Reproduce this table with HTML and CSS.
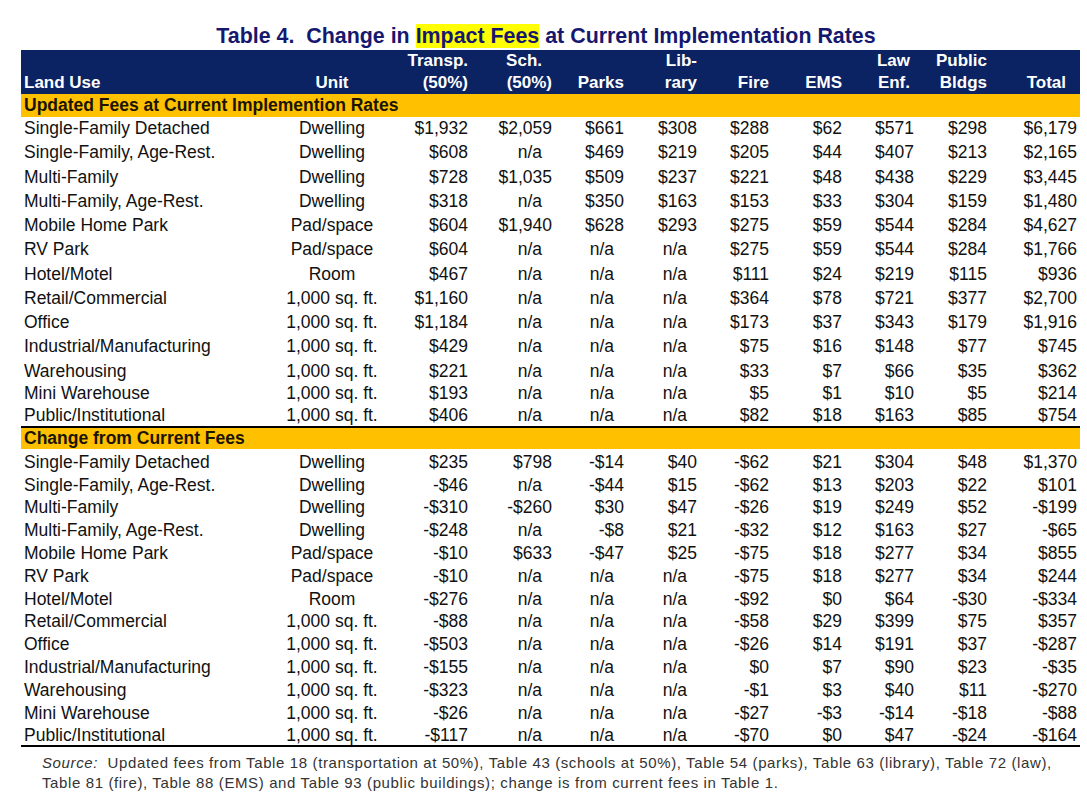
FILE: index.html
```html
<!DOCTYPE html>
<html>
<head>
<meta charset="utf-8">
<link rel="stylesheet" href="styles.css">
</head>
<body>
<div class="page">
  <h1 class="title">Table 4.&nbsp; Change in <span class="hl">Impact Fees</span> at Current Implementation Rates</h1>
  <table class="fees">
    <colgroup>
      <col class="c-land"><col class="c-unit"><col class="c-84"><col class="c-84"><col class="c-72"><col class="c-73"><col class="c-72"><col class="c-73"><col class="c-72"><col class="c-73"><col class="c-total">
    </colgroup>
    <thead>
      <tr>
        <th class="land">Land Use</th>
        <th class="unit">Unit</th>
        <th>Transp.<br>(50%)</th>
        <th><span class="sh10">Sch.</span><br>(50%)</th>
        <th>Parks</th>
        <th>Lib-<br>rary</th>
        <th>Fire</th>
        <th>EMS</th>
        <th class="law">Law<br>Enf.</th>
        <th>Public<br>Bldgs</th>
        <th class="tot">Total</th>
      </tr>
    </thead>
    <tbody class="s1">
      <tr class="sec"><td colspan="11">Updated Fees at Current Implemention Rates</td></tr>
      <tr><td>Single-Family Detached</td><td>Dwelling</td><td>$1,932</td><td>$2,059</td><td>$661</td><td>$308</td><td>$288</td><td>$62</td><td>$571</td><td>$298</td><td>$6,179</td></tr>
      <tr><td>Single-Family, Age-Rest.</td><td>Dwelling</td><td>$608</td><td class="na">n/a</td><td>$469</td><td>$219</td><td>$205</td><td>$44</td><td>$407</td><td>$213</td><td>$2,165</td></tr>
      <tr><td>Multi-Family</td><td>Dwelling</td><td>$728</td><td>$1,035</td><td>$509</td><td>$237</td><td>$221</td><td>$48</td><td>$438</td><td>$229</td><td>$3,445</td></tr>
      <tr><td>Multi-Family, Age-Rest.</td><td>Dwelling</td><td>$318</td><td class="na">n/a</td><td>$350</td><td>$163</td><td>$153</td><td>$33</td><td>$304</td><td>$159</td><td>$1,480</td></tr>
      <tr><td>Mobile Home Park</td><td>Pad/space</td><td>$604</td><td>$1,940</td><td>$628</td><td>$293</td><td>$275</td><td>$59</td><td>$544</td><td>$284</td><td>$4,627</td></tr>
      <tr><td>RV Park</td><td>Pad/space</td><td>$604</td><td class="na">n/a</td><td class="na">n/a</td><td class="na">n/a</td><td>$275</td><td>$59</td><td>$544</td><td>$284</td><td>$1,766</td></tr>
      <tr><td>Hotel/Motel</td><td>Room</td><td>$467</td><td class="na">n/a</td><td class="na">n/a</td><td class="na">n/a</td><td>$111</td><td>$24</td><td>$219</td><td>$115</td><td>$936</td></tr>
      <tr><td>Retail/Commercial</td><td>1,000 sq. ft.</td><td>$1,160</td><td class="na">n/a</td><td class="na">n/a</td><td class="na">n/a</td><td>$364</td><td>$78</td><td>$721</td><td>$377</td><td>$2,700</td></tr>
      <tr><td>Office</td><td>1,000 sq. ft.</td><td>$1,184</td><td class="na">n/a</td><td class="na">n/a</td><td class="na">n/a</td><td>$173</td><td>$37</td><td>$343</td><td>$179</td><td>$1,916</td></tr>
      <tr><td>Industrial/Manufacturing</td><td>1,000 sq. ft.</td><td>$429</td><td class="na">n/a</td><td class="na">n/a</td><td class="na">n/a</td><td>$75</td><td>$16</td><td>$148</td><td>$77</td><td>$745</td></tr>
      <tr class="tight"><td>Warehousing</td><td>1,000 sq. ft.</td><td>$221</td><td class="na">n/a</td><td class="na">n/a</td><td class="na">n/a</td><td>$33</td><td>$7</td><td>$66</td><td>$35</td><td>$362</td></tr>
      <tr class="tight"><td>Mini Warehouse</td><td>1,000 sq. ft.</td><td>$193</td><td class="na">n/a</td><td class="na">n/a</td><td class="na">n/a</td><td>$5</td><td>$1</td><td>$10</td><td>$5</td><td>$214</td></tr>
      <tr class="tight"><td>Public/Institutional</td><td>1,000 sq. ft.</td><td>$406</td><td class="na">n/a</td><td class="na">n/a</td><td class="na">n/a</td><td>$82</td><td>$18</td><td>$163</td><td>$85</td><td>$754</td></tr>
    </tbody>
    <tbody class="s2">
      <tr class="sec"><td colspan="11">Change from Current Fees</td></tr>
      <tr><td>Single-Family Detached</td><td>Dwelling</td><td>$235</td><td>$798</td><td>-$14</td><td>$40</td><td>-$62</td><td>$21</td><td>$304</td><td>$48</td><td>$1,370</td></tr>
      <tr><td>Single-Family, Age-Rest.</td><td>Dwelling</td><td>-$46</td><td class="na">n/a</td><td>-$44</td><td>$15</td><td>-$62</td><td>$13</td><td>$203</td><td>$22</td><td>$101</td></tr>
      <tr><td>Multi-Family</td><td>Dwelling</td><td>-$310</td><td>-$260</td><td>$30</td><td>$47</td><td>-$26</td><td>$19</td><td>$249</td><td>$52</td><td>-$199</td></tr>
      <tr><td>Multi-Family, Age-Rest.</td><td>Dwelling</td><td>-$248</td><td class="na">n/a</td><td>-$8</td><td>$21</td><td>-$32</td><td>$12</td><td>$163</td><td>$27</td><td>-$65</td></tr>
      <tr><td>Mobile Home Park</td><td>Pad/space</td><td>-$10</td><td>$633</td><td>-$47</td><td>$25</td><td>-$75</td><td>$18</td><td>$277</td><td>$34</td><td>$855</td></tr>
      <tr><td>RV Park</td><td>Pad/space</td><td>-$10</td><td class="na">n/a</td><td class="na">n/a</td><td class="na">n/a</td><td>-$75</td><td>$18</td><td>$277</td><td>$34</td><td>$244</td></tr>
      <tr><td>Hotel/Motel</td><td>Room</td><td>-$276</td><td class="na">n/a</td><td class="na">n/a</td><td class="na">n/a</td><td>-$92</td><td>$0</td><td>$64</td><td>-$30</td><td>-$334</td></tr>
      <tr><td>Retail/Commercial</td><td>1,000 sq. ft.</td><td>-$88</td><td class="na">n/a</td><td class="na">n/a</td><td class="na">n/a</td><td>-$58</td><td>$29</td><td>$399</td><td>$75</td><td>$357</td></tr>
      <tr><td>Office</td><td>1,000 sq. ft.</td><td>-$503</td><td class="na">n/a</td><td class="na">n/a</td><td class="na">n/a</td><td>-$26</td><td>$14</td><td>$191</td><td>$37</td><td>-$287</td></tr>
      <tr><td>Industrial/Manufacturing</td><td>1,000 sq. ft.</td><td>-$155</td><td class="na">n/a</td><td class="na">n/a</td><td class="na">n/a</td><td>$0</td><td>$7</td><td>$90</td><td>$23</td><td>-$35</td></tr>
      <tr><td>Warehousing</td><td>1,000 sq. ft.</td><td>-$323</td><td class="na">n/a</td><td class="na">n/a</td><td class="na">n/a</td><td>-$1</td><td>$3</td><td>$40</td><td>$11</td><td>-$270</td></tr>
      <tr><td>Mini Warehouse</td><td>1,000 sq. ft.</td><td>-$26</td><td class="na">n/a</td><td class="na">n/a</td><td class="na">n/a</td><td>-$27</td><td>-$3</td><td>-$14</td><td>-$18</td><td>-$88</td></tr>
      <tr class="last"><td>Public/Institutional</td><td>1,000 sq. ft.</td><td>-$117</td><td class="na">n/a</td><td class="na">n/a</td><td class="na">n/a</td><td>-$70</td><td>$0</td><td>$47</td><td>-$24</td><td>-$164</td></tr>
    </tbody>
  </table>
  <p class="source"><em>Source:</em>&nbsp; Updated fees from Table 18 (transportation at 50%), Table 43 (schools at 50%), Table 54 (parks), Table 63 (library), Table 72 (law),<br>Table 81 (fire), Table 88 (EMS) and Table 93 (public buildings); change is from current fees in Table 1.</p>
</div>
</body>
</html>
```
FILE: styles.css
```css
html, body {
  margin: 0;
  padding: 0;
  background: #ffffff;
}
body {
  font-family: "Liberation Sans", Arial, sans-serif;
  color: #111111;
}
.page {
  width: 1059px;
  margin-left: 21px;
  padding-top: 24px;
}
.title {
  margin: 0 0 2px 0;
  padding-right: 9px;
  font-size: 21.4px;
  line-height: 24px;
  font-weight: bold;
  color: #16186f;
  text-align: center;
  white-space: nowrap;
}
.hl {
  background: #ffff00;
}
.fees {
  border-collapse: separate;
  border-spacing: 0;
  table-layout: fixed;
  width: 1059px;
  font-size: 17.5px;
}
.c-land { width: 259px; }
.c-unit { width: 104px; }
.c-84 { width: 84px; }
.c-72 { width: 72px; }
.c-73 { width: 73px; }
.c-total { width: 93px; }

.fees th {
  background: #0b2363;
  color: #ffffff;
  font-size: 17px;
  font-weight: bold;
  line-height: 22px;
  padding: 0;
  text-align: right;
  vertical-align: bottom;
  white-space: nowrap;
}
.fees th.land { text-align: left; padding-left: 3px; }
.fees th.unit { text-align: center; }
.fees th.law { padding-right: 4px; }
.fees th.tot { padding-right: 14px; }
.sh10 { padding-right: 10px; }

.fees td {
  padding: 1px 0 3.25px 0;
  line-height: 20px;
  text-align: right;
  vertical-align: top;
  white-space: nowrap;
}
.fees td:first-child { text-align: left; padding-left: 3px; }
.fees td:nth-child(2) { text-align: center; }
.fees td:last-child { padding-right: 3px; }
.fees td.na { padding-right: 10px; }
.fees tr.tight td { padding-bottom: 1.2px; }

.fees tr.sec td {
  background: #ffc000;
  color: #1a1400;
  font-weight: bold;
  line-height: 23px;
  padding: 0 0 0 3px;
  text-align: left;
}
.fees .s2 td { padding-top: 2.8px; padding-bottom: 0; }
.fees .s2 tr.sec td {
  border-top: 2px solid #000000;
  line-height: 21px;
  padding: 0 0 0 3px;
}
.fees .s2 tr.last td { border-bottom: 2px solid #000000; }

.source {
  margin: 6px 0 0 21px;
  font-size: 15px;
  line-height: 20px;
  letter-spacing: 0.62px;
  color: #333333;
  white-space: nowrap;
}
```
